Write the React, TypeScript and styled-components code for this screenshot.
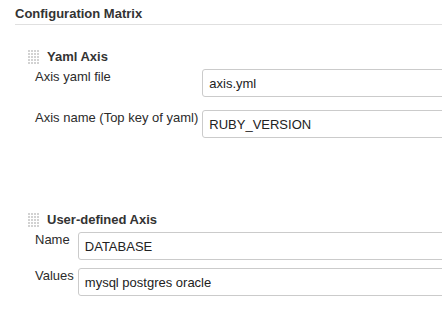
import React from 'react';
import styled, { createGlobalStyle } from 'styled-components';

const GlobalStyle = createGlobalStyle`
  html, body {
    margin: 0;
    padding: 0;
    overflow: hidden;
    background: #fff;
  }

  body {
    font-family: "Liberation Sans", Arial, Helvetica, sans-serif;
    font-size: 13px;
    color: #333;
  }
`;

const Page = styled.div`
  padding: 6px 0 0 15px;
  overflow: hidden;
`;

const SectionHeader = styled.div`
  font-weight: bold;
  font-size: 13px;
  line-height: 16px;
  color: #333;
  padding-bottom: 2px;
  border-bottom: 1px solid #e0e0e0;
`;

const AxisBlock = styled.div<{ top: number }>`
  margin-top: ${({ top }) => top}px;
  padding-left: 13px;
`;

const AxisTitle = styled.div`
  display: flex;
  align-items: center;
  gap: 8px;
  font-weight: bold;
  line-height: 16px;
  color: #333;
  margin-bottom: 4px;
`;

// the field column runs past the right edge of the frame, as in the screenshot
const Fields = styled.div<{ rowGap: number }>`
  display: grid;
  grid-template-columns: auto 1fr;
  column-gap: 4px;
  row-gap: ${({ rowGap }) => rowGap}px;
  padding-left: 7px;
  margin-right: -12px;
  align-items: start;
  overflow: hidden;
`;

const Label = styled.label`
  line-height: 16px;
  white-space: nowrap;
  color: #2b2b2b;
`;

const TextBox = styled.input`
  box-sizing: border-box;
  width: 100%;
  height: 28px;
  margin: 0;
  padding: 0 6px;
  border: 1px solid #cbcbcb;
  border-radius: 3px;
  font-family: inherit;
  font-size: 13px;
  color: #222;
  background: #fff;
  outline: none;
`;

function Handle() {
  const dots = [];
  for (let r = 0; r < 5; r++) {
    for (let c = 0; c < 4; c++) {
      dots.push(<rect key={`${r}-${c}`} x={c * 3} y={r * 3} width="2" height="2" fill="#d2d2d2" />);
    }
  }
  return (
    <svg width="11" height="14" viewBox="0 0 11 14">
      {dots}
    </svg>
  );
}

function Field(props: { label: string; value: string }) {
  return (
    <>
      <Label>{props.label}</Label>
      <TextBox defaultValue={props.value} />
    </>
  );
}

export default function App() {
  return (
    <Page>
      <GlobalStyle />
      <SectionHeader>Configuration Matrix</SectionHeader>

      <AxisBlock top={24}>
        <AxisTitle>
          <Handle />
          Yaml Axis
        </AxisTitle>
        <Fields rowGap={13}>
          <Field label="Axis yaml file" value="axis.yml" />
          <Field label="Axis name (Top key of yaml)" value="RUBY_VERSION" />
        </Fields>
      </AxisBlock>

      <AxisBlock top={74}>
        <AxisTitle>
          <Handle />
          User-defined Axis
        </AxisTitle>
        <Fields rowGap={8}>
          <Field label="Name" value="DATABASE" />
          <Field label="Values" value="mysql postgres oracle" />
        </Fields>
      </AxisBlock>
    </Page>
  );
}
